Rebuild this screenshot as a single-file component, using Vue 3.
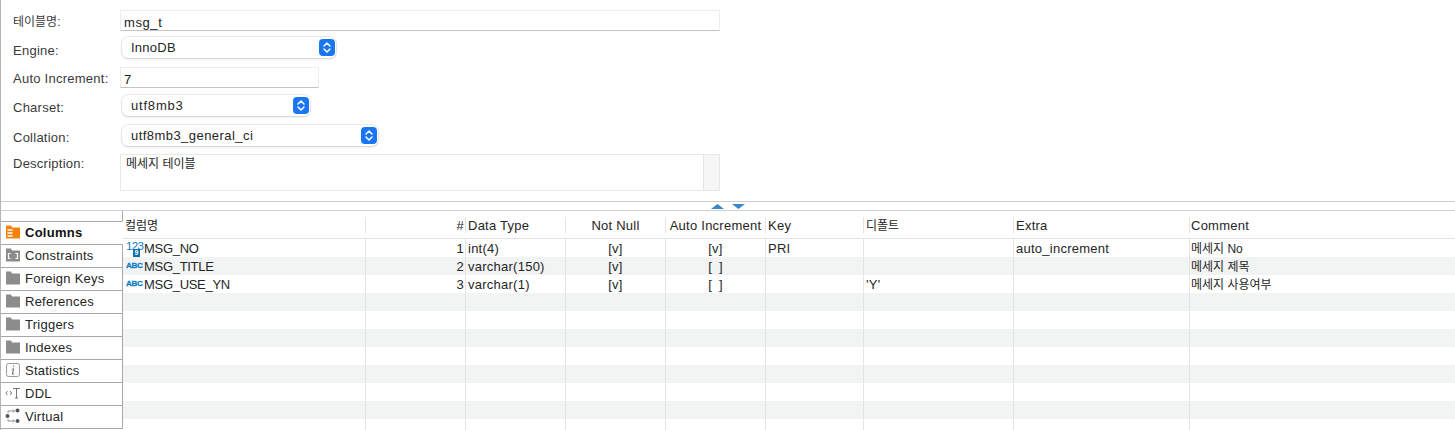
<script setup>
const tabs = [
  { name: 'Columns', icon: 'columns', active: true },
  { name: 'Constraints', icon: 'constraints' },
  { name: 'Foreign Keys', icon: 'folder' },
  { name: 'References', icon: 'folder' },
  { name: 'Triggers', icon: 'folder' },
  { name: 'Indexes', icon: 'folder' },
  { name: 'Statistics', icon: 'info' },
  { name: 'DDL', icon: 'ddl' },
  { name: 'Virtual', icon: 'virtual' }
]
const headers = ['컬럼명', '#', 'Data Type', 'Not Null', 'Auto Increment', 'Key', '디폴트', 'Extra', 'Comment']
const rows = [
  { kind: 'num', name: 'MSG_NO', no: 1, type: 'int(4)', nn: '[v]', ai: '[v]', key: 'PRI', def: '', extra: 'auto_increment', comment: '메세지 No' },
  { kind: 'abc', name: 'MSG_TITLE', no: 2, type: 'varchar(150)', nn: '[v]', ai: '[ ]', key: '', def: '', extra: '', comment: '메세지 제목' },
  { kind: 'abc', name: 'MSG_USE_YN', no: 3, type: 'varchar(1)', nn: '[v]', ai: '[ ]', key: '', def: "'Y'", extra: '', comment: '메세지 사용여부' }
]
const blanks = 8
</script>

<template>
  <div class="page">
    <section class="form">
      <div class="row r1">
        <label class="ko">테이블명:</label>
        <div class="input wide">msg_t</div>
      </div>
      <div class="row r2">
        <label>Engine:</label>
        <div class="select s-engine">InnoDB
          <span class="stepper"><svg width="10" height="13" viewBox="0 0 10 13"><path d="M2 5 5 2l3 3M2 8l3 3 3-3" fill="none" stroke="#fff" stroke-width="1.5" stroke-linecap="round" stroke-linejoin="round"/></svg></span>
        </div>
      </div>
      <div class="row r3">
        <label>Auto Increment:</label>
        <div class="input short">7</div>
      </div>
      <div class="row r4">
        <label>Charset:</label>
        <div class="select s-charset">utf8mb3
          <span class="stepper"><svg width="10" height="13" viewBox="0 0 10 13"><path d="M2 5 5 2l3 3M2 8l3 3 3-3" fill="none" stroke="#fff" stroke-width="1.5" stroke-linecap="round" stroke-linejoin="round"/></svg></span>
        </div>
      </div>
      <div class="row r5">
        <label>Collation:</label>
        <div class="select s-collation">utf8mb3_general_ci
          <span class="stepper"><svg width="10" height="13" viewBox="0 0 10 13"><path d="M2 5 5 2l3 3M2 8l3 3 3-3" fill="none" stroke="#fff" stroke-width="1.5" stroke-linecap="round" stroke-linejoin="round"/></svg></span>
        </div>
      </div>
      <div class="row r6">
        <label>Description:</label>
        <div class="textarea">
          <div class="ta-text">메세지 테이블</div>
          <div class="ta-scroll"></div>
        </div>
      </div>
    </section>

    <div class="sash">
      <svg width="34" height="5" viewBox="0 0 34 5"><path d="M0 5 6.500 0 13 5Z" fill="#3b86c6"/><path d="M21 0H34L27.500 5Z" fill="#3b86c6"/></svg>
    </div>

    <section class="main">
      <nav class="tabs">
        <div v-for="t in tabs" :key="t.name" class="tab" :class="{ active: t.active }">
          <svg class="tab-icon" width="16" height="16" viewBox="0 0 16 16">
            <template v-if="t.icon === 'columns'">
              <path d="M1 1.500h5l1 2h8v11H1Z" fill="#f5820f"/>
              <path d="M2.500 6h5M2.500 9h5M2.500 12h5" stroke="#fff" stroke-width="1.300"/>
            </template>
            <template v-else-if="t.icon === 'constraints'">
              <path d="M1 1.500h5l1 2h8v11H1Z" fill="#8c8c8c"/>
              <path d="M5.500 6.500h-2v5h2M10.500 6.500h2v5h-2" fill="none" stroke="#fff" stroke-width="1.200"/>
            </template>
            <template v-else-if="t.icon === 'folder'">
              <path d="M1 1.500h5l1 2h8v11H1Z" fill="#8c8c8c"/>
            </template>
            <template v-else-if="t.icon === 'info'">
              <rect x="1.500" y="1.500" width="13" height="13" rx="2" fill="#fafafa" stroke="#9a9a9a"/>
              <path d="M8.600 3.500v1.300M7 7h1.500l-1 5H9" fill="none" stroke="#777" stroke-width="1.100"/>
            </template>
            <template v-else-if="t.icon === 'ddl'">
              <path d="M2.500 6 .8 8l1.700 2M5 6l1.700 2L5 10" fill="none" stroke="#666" stroke-width=".9"/>
              <path d="M8 3.500h7M11.500 3.500v9.500M10 13h3" fill="none" stroke="#666" stroke-width=".9"/>
            </template>
            <template v-else>
              <circle cx="12.500" cy="2.500" r="2" fill="#555"/>
              <circle cx="2.500" cy="8" r="2" fill="#555"/>
              <circle cx="12.500" cy="13" r="2" fill="#555"/>
              <path d="M3 5V3h6M3 11v2h6M8 1.500 9.500 3 8 4.500M8 11.500 9.500 13 8 14.500" fill="none" stroke="#777" stroke-width=".8"/>
            </template>
          </svg>
          <span>{{ t.name }}</span>
        </div>
      </nav>

      <div class="table">
        <div class="thead">
          <div v-for="(h, i) in headers" :key="h" class="th" :class="'c' + i">{{ h }}</div>
        </div>
        <div v-for="r in rows" :key="r.name" class="tr">
          <div class="td c0">
            <span v-if="r.kind === 'num'" class="type-icon num">123<i class="tile">9</i></span>
            <span v-else class="type-icon abc">ABC</span>
            <span class="cname">{{ r.name }}</span>
          </div>
          <div class="td c1">{{ r.no }}</div>
          <div class="td c2">{{ r.type }}</div>
          <div class="td c3">{{ r.nn }}</div>
          <div class="td c4">{{ r.ai }}</div>
          <div class="td c5">{{ r.key }}</div>
          <div class="td c6">{{ r.def }}</div>
          <div class="td c7">{{ r.extra }}</div>
          <div class="td c8">{{ r.comment }}</div>
        </div>
        <div v-for="n in blanks" :key="n" class="tr">
          <div v-for="c in 9" :key="c" class="td"></div>
        </div>
      </div>
    </section>
  </div>
</template>

<style scoped>
.page {
  width: 1455px;
  height: 430px;
  box-sizing: border-box;
  overflow: hidden;
  background: #fff;
  color: #262626;
  border-left: 1px solid #b4b4b4;
  font: 13px/16px "Liberation Sans", "Noto Sans CJK KR", sans-serif;
  letter-spacing: 0.25px;
}
.form {
  height: 201px;
  box-sizing: border-box;
  padding-top: 10px;
}
.row { display: flex; align-items: flex-start; }
.row label { width: 107px; margin-left: 12px; flex: none; color: #3a3a3a; }
.row label.ko { font-size: 12px; letter-spacing: 0; }
.r1 { height: 27px; }
.r2 { height: 30px; }
.r3 { height: 28px; }
.r4 { height: 30px; }
.r5 { height: 29px; }
.r6 { height: 47px; }
.r1 label { padding-top: 4px; }
.r2 label { padding-top: 6px; }
.r3 label { padding-top: 4px; }
.r4 label { padding-top: 5px; }
.r5 label { padding-top: 5px; }
.r6 label { padding-top: 2px; }
.input {
  height: 21px;
  box-sizing: border-box;
  padding: 4px 3px 0;
  border: 1px solid #ececec;
  border-bottom-color: #c4c4c4;
  color: #222;
}
.wide { width: 600px; letter-spacing: .6px; }
.short { width: 199px; }
.select {
  position: relative;
  margin-left: 2px;
  height: 21px;
  box-sizing: border-box;
  padding: 3px 0 0 9px;
  background: #fff;
  border-radius: 6px;
  box-shadow: 0 0 0 .5px #d8d8d8, 0 1px 2px rgba(0, 0, 0, .2);
}
.s-engine { width: 214px; }
.s-charset { width: 188px; letter-spacing: .8px; }
.s-collation { width: 256px; letter-spacing: .45px; }
.stepper {
  position: absolute;
  right: 1px;
  top: 2px;
  width: 16px;
  height: 17px;
  display: flex;
  align-items: center;
  justify-content: center;
  background: #1a76f2;
  border-radius: 4px;
}
.textarea {
  width: 600px;
  height: 37px;
  box-sizing: border-box;
  display: flex;
  border: 1px solid #e8e8e8;
}
.ta-text {
  flex: 1;
  padding: 1px 5px 0;
  font-size: 12px;
  line-height: 16px;
  letter-spacing: 0;
}
.ta-scroll {
  width: 15px;
  background: #f6f6f6;
  border-left: 1px solid #e4e4e4;
}
.sash {
  height: 10px;
  box-sizing: border-box;
  border-top: 1px solid #cfcfcf;
  border-bottom: 1px solid #cfcfcf;
  padding: 2px 0 0 710px;
}
.sash svg { display: block; }
.main { display: flex; height: 219px; }
.tabs {
  width: 122px;
  flex: none;
  box-sizing: border-box;
  padding-top: 10px;
  position: relative;
}
.tabs::before {
  content: "";
  position: absolute;
  right: 0;
  top: 0;
  height: 10px;
  border-right: 1px solid #a8a8a8;
}
.tab {
  height: 23px;
  box-sizing: border-box;
  display: flex;
  align-items: center;
  gap: 4px;
  padding-left: 5px;
  border-top: 1px solid #a8a8a8;
  border-right: 1px solid #a8a8a8;
}
.tab:last-child { height: 24px; border-bottom: 1px solid #a8a8a8; }
.tab.active { font-weight: 700; border-right-color: transparent; color: #111; }
.tab-icon { flex: none; margin: -3px 0 0 -1px; }
.table { flex: 1; min-width: 0; }
.thead, .tr {
  display: grid;
  grid-template-columns: 242px 100px 100px 100px 100px 98px 150px 176px 1fr;
}
.thead {
  height: 28px;
  box-sizing: border-box;
  padding-top: 6px;
  border-bottom: 1px solid #e2e2e2;
}
.th {
  height: 16px;
  line-height: 18px;
  padding-left: 2px;
  border-left: 1px solid #e4e4e4;
  white-space: nowrap;
}
.th.c0 { border-left: 0; font-size: 12px; letter-spacing: 0; }
.th.c6 { font-size: 12px; letter-spacing: 0; }
.th.c8 { padding-left: 1px; }
.th.c1 { text-align: right; padding-right: 1px; }
.th.c3, .th.c4 { text-align: center; padding-left: 0; }
.tr { height: 18px; line-height: 20px; }
.tr:nth-of-type(odd) { background: #f2f3f3; }
.tr:nth-of-type(even) { background: #fff; }
.td {
  border-left: 1px solid #e4e4e4;
  padding-left: 2px;
  white-space: nowrap;
  overflow: hidden;
}
.td:first-child { border-left: 0; }
.td.c0 { display: flex; align-items: center; padding-left: 3px; }
.td.c1 { text-align: right; padding-right: 1px; }
.td.c3, .td.c4 { text-align: center; padding-left: 0; white-space: pre; }
.td.c4 { word-spacing: 3px; }
.td.c8 { font-size: 12px; letter-spacing: 0; padding-left: 1px; }
.cname { letter-spacing: -.3px; padding-top: 2px; line-height: 16px; }
.type-icon {
  position: relative;
  flex: none;
  width: 18px;
  height: 16px;
  color: #0b7bc6;
  letter-spacing: 0;
}
.abc {
  font-weight: 700;
  font-size: 8px;
  line-height: 15px;
  letter-spacing: -.25px;
  -webkit-text-stroke: .3px #0b7bc6;
}
.num { font-size: 11.500px; letter-spacing: -.6px; line-height: 13px; }
.tile {
  position: absolute;
  left: 7px;
  top: 9px;
  width: 7px;
  height: 8px;
  background: #0b6ea8;
  color: #fff;
  font: 700 7px/8px "Liberation Sans", sans-serif;
  letter-spacing: 0;
  text-align: center;
}
</style>

<style>
html, body { background: #fff; }
</style>
